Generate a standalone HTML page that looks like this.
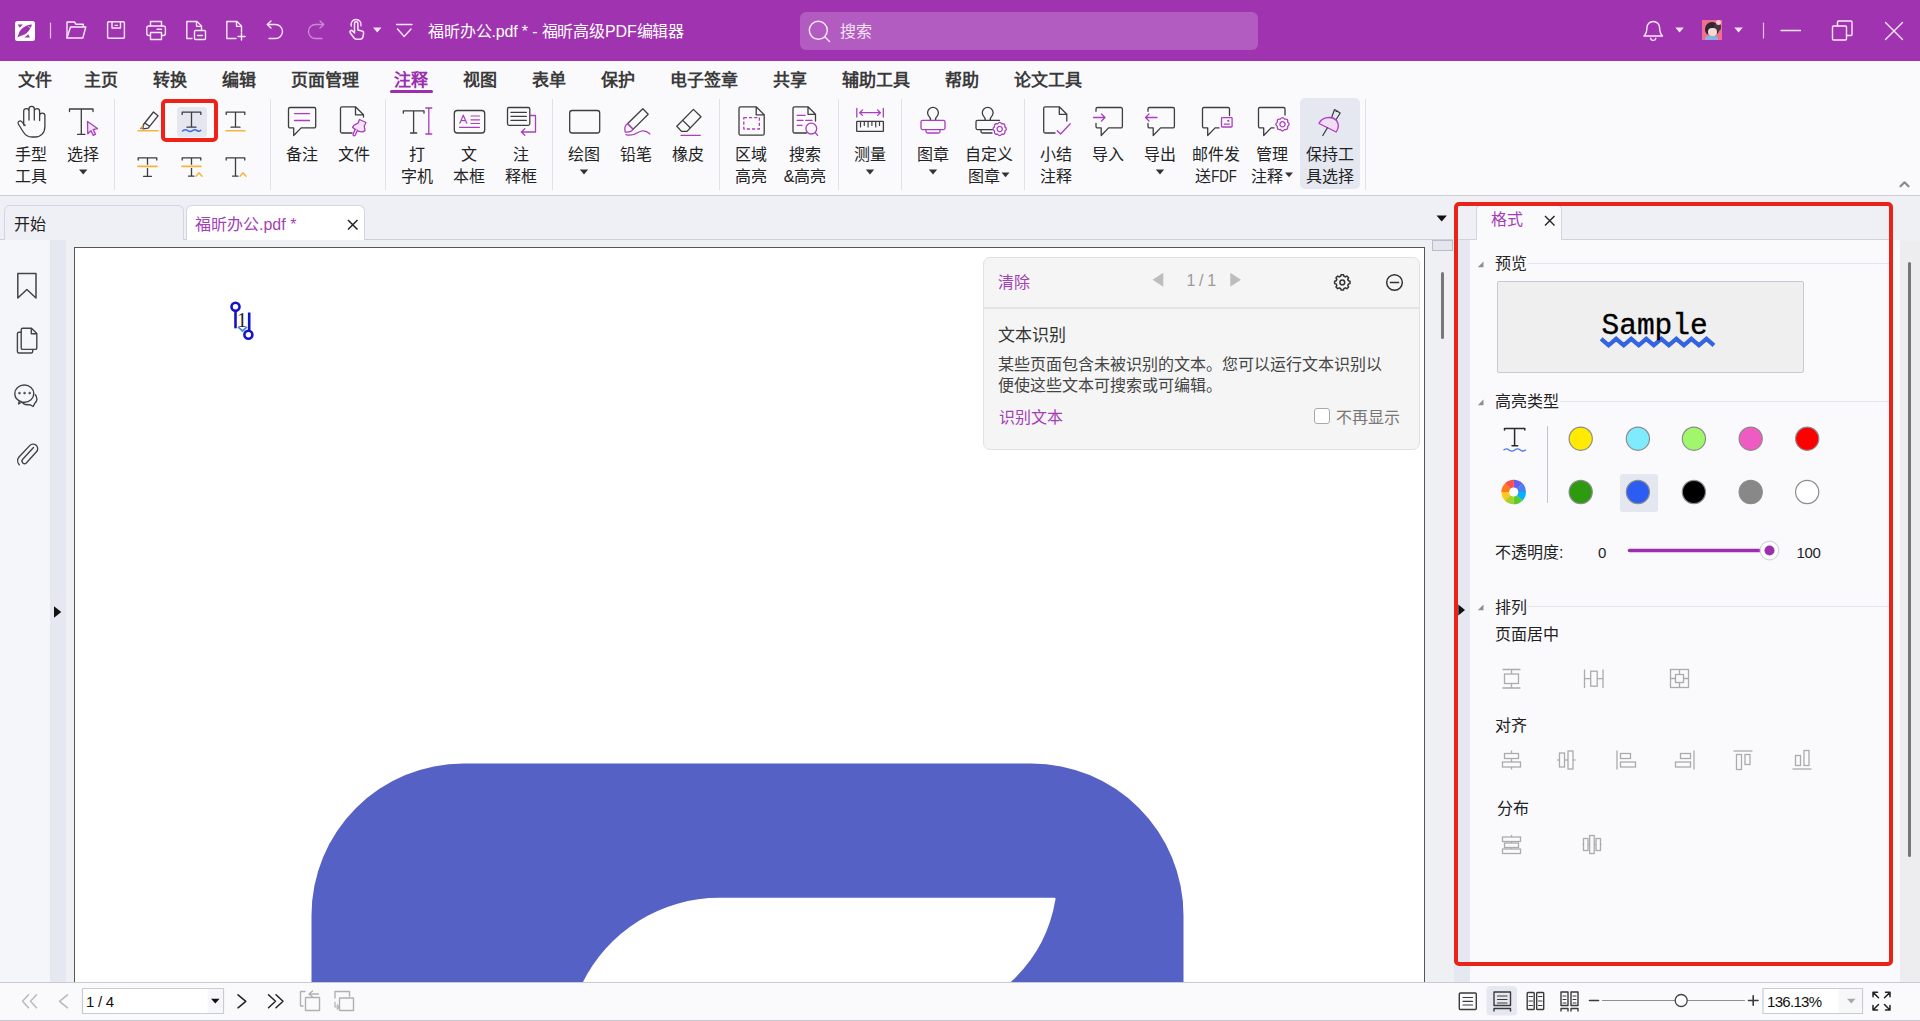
<!DOCTYPE html>
<html lang="zh-CN">
<head>
<meta charset="utf-8">
<title>PDF Editor</title>
<style>
*{box-sizing:border-box;margin:0;padding:0}
html,body{width:1920px;height:1021px;overflow:hidden;background:#EFF0F4;font-family:"Liberation Sans",sans-serif;color:#222;}
.abs{position:absolute}
svg{position:absolute;overflow:visible}
.t{position:absolute;white-space:nowrap;line-height:1}
/* title bar */
#titlebar{position:absolute;left:0;top:0;width:1920px;height:61px;background:#A033B0}
#search{position:absolute;left:800px;top:12px;width:458px;height:38px;border-radius:6px;background:#B25BC0}
/* ribbon */
#ribbon{position:absolute;left:0;top:61px;width:1920px;height:135px;background:#FAFAFD}
#ribbonline{position:absolute;left:0;top:195px;width:1920px;height:1px;background:#CBCDD5}
.mtab{position:absolute;top:71px;font-size:17px;font-weight:700;color:#3a3a3a;white-space:nowrap;line-height:20px}
.rl{position:absolute;font-size:16px;line-height:22px;text-align:center;color:#222;white-space:nowrap;transform:translateX(-50%)}
.vsep{position:absolute;top:99px;width:1px;height:91px;background:#E1E2E8}
/* doc tabs */
#doctabs{position:absolute;left:0;top:196px;width:1455px;height:45px;background:#EFF0F5}
/* sidebars */
#leftbar{position:absolute;left:0;top:240px;width:50px;height:742px;background:#F5F6FA}
#leftstrip{position:absolute;left:50px;top:240px;width:16px;height:742px;background:#E5E8F1}
#page{position:absolute;left:74px;top:247px;width:1351px;height:740px;background:#fff;border:1.5px solid #555;border-bottom:none}
/* status */
#status{position:absolute;left:0;top:982px;width:1920px;height:39px;background:#FAFAFD;border-top:1.5px solid #C9CBD3;border-bottom:1.5px solid #C4C6CC}
</style>
</head>
<body>
<div id="titlebar">
<div id="search"></div>
<svg width="1920" height="61" viewBox="0 0 1920 61" fill="none" stroke="#FCE9FF" stroke-width="1.4" stroke-linejoin="round" stroke-linecap="round">
<!-- app logo -->
<rect x="15" y="21" width="20" height="20" rx="2.5" fill="#fff" stroke="none"/>
<path d="M32,24.6 C26,25 20.5,28.5 18.8,33.5 L17.4,37.6 C21,35.5 24,35 26.5,33.2 C29.5,31 31,27.5 32,24.6 Z" fill="#A033B0" stroke="none"/>
<path d="M17.6,24.6 H23 C21.8,25.6 20.8,26.6 19.8,27.8 Z" fill="#A033B0" stroke="none"/>
<path d="M24.3,37.5 H30 L28.2,34.3 C27,35.6 25.8,36.6 24.3,37.5 Z" fill="#A033B0" stroke="none"/>
<path d="M28.6,26.6 L30.6,28.2" stroke="#fff" stroke-width="0.7"/>
<!-- sep -->
<path d="M50.5,23 V38" stroke="#E4C4EA" stroke-width="1.2"/>
<!-- folder -->
<path d="M67,38 V22 H74.5 L76,24.3 H83.3 V26.8"/>
<path d="M67,38 L70.5,27 H85.8 L82.8,38 Z"/>
<!-- save -->
<rect x="107.6" y="21.8" width="16.8" height="16.4" rx="1"/>
<path d="M112,21.8 V28 H120.5 V21.8"/>
<path d="M115,25.3 H117.5" stroke-width="1.2"/>
<!-- print -->
<path d="M150.5,26 V21.5 H161.5 V26"/>
<rect x="146.8" y="26" width="18.6" height="9.5" rx="2"/>
<rect x="150.5" y="32.5" width="11" height="7" fill="#A033B0"/>
<path d="M157,29.3 H161.5" stroke-width="1.4"/>
<!-- page with box -->
<path d="M192,38.5 H186.8 V21.5 H197 L201.5,26 V30"/>
<path d="M196.5,21.8 V26.3 H201.2" stroke-width="1.3"/>
<rect x="194.5" y="30.5" width="11" height="9" rx="1"/>
<path d="M197.5,35.5 H202.5" stroke-width="1.3"/>
<!-- new page plus -->
<path d="M236,38.5 H226.8 V21.5 H237 L241.5,26 V32"/>
<path d="M236.5,21.8 V26.3 H241.2" stroke-width="1.3"/>
<path d="M241.5,33 V40 M238,36.5 H245"/>
<!-- undo -->
<path d="M269,38.5 H275.5 A7,7 0 0 0 275.5,24.5 H267.5"/>
<path d="M271,21 L267.3,24.5 L271,28"/>
<!-- redo dim -->
<g stroke="#C88AD2">
<path d="M322,38.5 H315.5 A7,7 0 0 1 315.5,24.5 H323.5"/>
<path d="M320,21 L323.7,24.5 L320,28"/>
</g>
<!-- touch hand -->
<path d="M354.5,33 V23.5 a1.7,1.7 0 0 1 3.4,0 V30 l4.2,1 a2,2 0 0 1 1.5,2.2 l-0.6,3.5 a3.2,3.2 0 0 1 -3.2,2.6 h-3.2 a3.5,3.5 0 0 1 -2.8,-1.5 l-3.6,-5 a1.5,1.5 0 0 1 2.2,-2 z" stroke-width="1.5"/>
<path d="M351.3,26 a5,5 0 1 1 9.6,-0.2" stroke-width="1.4"/>
<path d="M373,27.500 h8.500 l-4.250,5 z" fill="#F8E3FB" stroke="none"/>
<!-- customize -->
<path d="M396.5,24.5 H412"/>
<path d="M397.5,29 L404.2,36.5 L411,29"/>
<!-- search icon -->
<circle cx="818.3" cy="30.3" r="9"/>
<path d="M825,37 L829.5,41.5"/>
<!-- bell -->
<path d="M1644,36 H1662.500 C1660,33.500 1659.600,31 1659.600,27.800 a6.350,6.350 0 0 0 -12.700,0 C1646.900,31 1646.500,33.500 1644,36 Z" stroke-width="1.400"/>
<path d="M1650.700,38.300 a2.600,2.600 0 0 0 5.100,0" stroke-width="1.400"/>
<path d="M1675.300,27.500 h8.500 l-4.250,5 z" fill="#F8E3FB" stroke="none"/>
<path d="M1734.300,27.500 h8.500 l-4.250,5 z" fill="#F8E3FB" stroke="none"/>
<path d="M1763.5,23 V38" stroke="#E4C4EA" stroke-width="1.2"/>
<!-- window btns -->
<path d="M1781,30.5 H1800.5" stroke-width="1.4"/>
<rect x="1832.5" y="26" width="14" height="14" rx="1" stroke-width="1.4"/>
<path d="M1837.5,26 V22 a1,1 0 0 1 1,-1 H1851 a1,1 0 0 1 1,1 V34.5 a1,1 0 0 1 -1,1 H1846.5" stroke-width="1.4"/>
<path d="M1885.5,22.5 L1902.5,39.5 M1902.5,22.5 L1885.5,39.5" stroke-width="1.4"/>
</svg>
<div class="t" id="apptitle" style="left:428px;top:24px;font-size:16px;color:#fff;letter-spacing:-0.15px">福昕办公.pdf * - 福昕高级PDF编辑器</div>
<div class="t" style="left:840px;top:24px;font-size:16px;color:#F3E3F6;">搜索</div>
<!-- avatar -->
<div class="abs" style="left:1702px;top:20px;width:20px;height:20px;background:#EE6F90;overflow:hidden">
 <div class="abs" style="left:3px;top:2px;width:14px;height:13px;background:#33262E;border-radius:7px 7px 5px 5px"></div>
 <div class="abs" style="left:12px;top:3px;width:7px;height:8px;background:#4A3440;border-radius:4px"></div>
 <div class="abs" style="left:6px;top:8px;width:9px;height:8px;background:#F4DAD4;border-radius:4px"></div>
 <div class="abs" style="left:3px;top:15.500px;width:13px;height:5px;background:#86B4DE;border-radius:3px 3px 0 0"></div>
 <div class="abs" style="left:14px;top:0px;width:5px;height:5px;background:#F7C9D6;border-radius:3px"></div>
</div>
</div>
</div>
<div id="ribbon"></div>
<div id="ribbonline"></div>
<div class="mtab" style="left:18px">文件</div>
<div class="mtab" style="left:84px">主页</div>
<div class="mtab" style="left:153px">转换</div>
<div class="mtab" style="left:222px">编辑</div>
<div class="mtab" style="left:291px">页面管理</div>
<div class="mtab" style="left:394px;color:#9B2FAE">注释</div>
<div class="mtab" style="left:463px">视图</div>
<div class="mtab" style="left:532px">表单</div>
<div class="mtab" style="left:601px">保护</div>
<div class="mtab" style="left:670px">电子签章</div>
<div class="mtab" style="left:773px">共享</div>
<div class="mtab" style="left:842px">辅助工具</div>
<div class="mtab" style="left:945px">帮助</div>
<div class="mtab" style="left:1014px">论文工具</div>
<div class="abs" style="left:389.500px;top:89.500px;width:43px;height:3.500px;border-radius:1.750px;background:#9B2FAE"></div>
<div class="abs" style="left:1300px;top:98px;width:60px;height:91px;border-radius:5px;background:#E5E8F1"></div>
<div class="abs" style="left:177px;top:107px;width:30px;height:30px;border-radius:4px;background:#E4E7F0"></div>
<div class="rl" style="left:31px;top:144px">手型</div>
<div class="rl" style="left:31px;top:166px">工具</div>
<div class="rl" style="left:83px;top:144px">选择</div>
<div class="rl" style="left:302px;top:144px">备注</div>
<div class="rl" style="left:354px;top:144px">文件</div>
<div class="rl" style="left:417px;top:144px">打</div>
<div class="rl" style="left:417px;top:166px">字机</div>
<div class="rl" style="left:469px;top:144px">文</div>
<div class="rl" style="left:469px;top:166px">本框</div>
<div class="rl" style="left:521px;top:144px">注</div>
<div class="rl" style="left:521px;top:166px">释框</div>
<div class="rl" style="left:584px;top:144px">绘图</div>
<div class="rl" style="left:636px;top:144px">铅笔</div>
<div class="rl" style="left:688px;top:144px">橡皮</div>
<div class="rl" style="left:751px;top:144px">区域</div>
<div class="rl" style="left:751px;top:166px">高亮</div>
<div class="rl" style="left:805px;top:144px">搜索</div>
<div class="rl" style="left:805px;top:166px">&amp;高亮</div>
<div class="rl" style="left:870px;top:144px">测量</div>
<div class="rl" style="left:933px;top:144px">图章</div>
<div class="rl" style="left:989px;top:144px">自定义</div>
<div class="rl" style="left:984px;top:166px">图章</div>
<div class="rl" style="left:1056px;top:144px">小结</div>
<div class="rl" style="left:1056px;top:166px">注释</div>
<div class="rl" style="left:1108px;top:144px">导入</div>
<div class="rl" style="left:1160px;top:144px">导出</div>
<div class="rl" style="left:1216px;top:144px">邮件发</div>
<div class="rl" style="left:1216px;top:166px">送<span style="display:inline-block;transform:scaleX(0.820);transform-origin:0 50%;margin-right:-5.600px">FDF</span></div>
<div class="rl" style="left:1272px;top:144px">管理</div>
<div class="rl" style="left:1267px;top:166px">注释</div>
<div class="rl" style="left:1330px;top:144px">保持工</div>
<div class="rl" style="left:1330px;top:166px">具选择</div>
<div class="vsep" style="left:114px"></div>
<div class="vsep" style="left:270px"></div>
<div class="vsep" style="left:385px"></div>
<div class="vsep" style="left:552px"></div>
<div class="vsep" style="left:719px"></div>
<div class="vsep" style="left:838px"></div>
<div class="vsep" style="left:901px"></div>
<div class="vsep" style="left:1024px"></div>
<div class="vsep" style="left:1365px"></div>
<div class="abs" style="left:161px;top:99px;width:57px;height:43px;border:4px solid #EF2119;border-radius:5px"></div>

<svg id="rib" width="1920" height="200" viewBox="0 0 1920 200" style="left:0;top:0" fill="none" stroke="#3d3d3d" stroke-width="1.300" stroke-linejoin="round" stroke-linecap="round">
<defs>
<g id="tsm"><path d="M-9.300,2.200 V0 H9.300 V2.200 M0,0 V15 M-4.500,15 H4.500"/></g>
<g id="gear"><circle r="2.600"/><path d="M-2.14,-5.17 Q0.00,-8.20 2.14,-5.17 Q5.80,-5.80 5.17,-2.14 Q8.20,0.00 5.17,2.14 Q5.80,5.80 2.14,5.17 Q0.00,8.20 -2.14,5.17 Q-5.80,5.80 -5.17,2.14 Q-8.20,0.00 -5.17,-2.14 Q-5.80,-5.80 -2.14,-5.17 Z"/></g>
<g id="bubble"><path d="M0,0 H27 V20.4 H12.8 L5.3,28 V20.4 H0 Z"/></g>
<g id="pagef"><path d="M15.5,0 H1.5 a1.5,1.5 0 0 0 -1.5,1.5 V24.7 a1.5,1.5 0 0 0 1.5,1.5 H21.5 a1.5,1.5 0 0 0 1.5,-1.5 V7.5 Z M15.5,0 V7.5 H23"/></g>
</defs>
<!-- hand tool -->
<path d="M23.700,125 V111.200 a2.650,2.650 0 0 1 5.300,0 V120 M29,111.200 V109 a2.650,2.650 0 0 1 5.300,0 V120 M34.300,111.200 a2.650,2.650 0 0 1 5.300,0 V120.500 M39.600,115.700 a2.650,2.650 0 0 1 5.300,0 V126.500 c0,6.300 -4,10.500 -9.800,10.500 h-3 c-4,0 -6.800,-1.800 -8.800,-5 l-5,-8 a2.100,2.100 0 0 1 3.400,-2.400 l3.400,3.900"/>
<!-- select -->
<path d="M69.5,111.5 V109 H93 V111.5 M81.3,109 V134.3 M77.5,134.3 H85"/>
<path d="M87.5,121.5 L97.5,128.5 L93.2,129.6 L95.6,134.2 L93.3,135.4 L91,130.8 L87.8,133.8 Z" stroke="#A93FBC" stroke-width="1.3" fill="#F6E4FA"/>
<path d="M79,169.5 h8.4 l-4.2,5 z" fill="#333" stroke="none"/>
<!-- highlighter -->
<path d="M143.5,124.5 L153.5,112 L158,115.8 L148.2,128.2 L143.3,128.8 Z M145,123 L149.6,126.6"/>
<path d="M140.5,128.6 L143.3,128.8 L143.6,125.5 Z" fill="#F3B63A" stroke="#8a6a20" stroke-width="0.8"/>
<path d="M138,130.8 H158" stroke="#F3B63A" stroke-width="1.6"/>
<!-- squiggly T (selected) -->
<use href="#tsm" x="191.5" y="112.2"/>
<path d="M182.5,131 c2,-1.6 3.6,-1.6 5.2,-0.4 c1.6,1.2 3.2,1.2 4.8,0 c1.6,-1.2 3.2,-1.2 4.6,0 c1.2,1 2.4,0.8 3.6,-0.2" stroke="#3C6BEA" stroke-width="1.5"/>
<!-- underline T -->
<use href="#tsm" x="235.5" y="112.2"/>
<path d="M226,130.8 H245" stroke="#F3B63A" stroke-width="1.6"/>
<!-- strikeout T -->
<g transform="translate(147.500,157.800)"><path d="M-9.300,2.200 V0 H9.300 V2.200 M0,0 V18.500 M-4,18.500 H4"/></g>
<rect x="137" y="164.8" width="21" height="3.2" fill="#FAFAFD" stroke="none"/>
<path d="M138,166.4 H157" stroke="#F3B63A" stroke-width="1.6"/>
<!-- replace T -->
<g transform="translate(191.5,157.8)"><path d="M-9.300,2.200 V0 H9.300 V2.200 M0,0 V18.300 M-3,18.300 H2.500"/></g>
<rect x="181" y="164.8" width="21" height="3.2" fill="#FAFAFD" stroke="none"/>
<path d="M182,166.4 H201" stroke="#F3B63A" stroke-width="1.6"/>
<path d="M196,176.3 L199,172.8 L202,176.3" stroke="#F3B63A" stroke-width="1.5"/>
<!-- insert T -->
<g transform="translate(235.5,157.8)"><path d="M-9.300,2.200 V0 H9.300 V2.200 M0,0 V18.300 M-3,18.300 H2.500"/></g>
<path d="M240,176.3 L243,172.8 L246,176.3" stroke="#F3B63A" stroke-width="1.5"/>
<!-- note -->
<path d="M290,107.5 H314.2 a1.5,1.5 0 0 1 1.5,1.5 V126.4 a1.5,1.5 0 0 1 -1.5,1.5 H301.2 L293.7,135.5 V127.9 H290 a1.5,1.5 0 0 1 -1.5,-1.5 V109 a1.5,1.5 0 0 1 1.5,-1.5 Z"/>
<path d="M294.5,113.6 H309.5 M294.5,120.5 H309.5" stroke="#A93FBC"/>
<!-- file attach -->
<path d="M352,133 H342 a1.5,1.5 0 0 1 -1.5,-1.5 V108.3 a1.5,1.5 0 0 1 1.5,-1.5 H355.5 L363.5,114.8 V117 M355.5,106.8 V114.8 H363.5"/>
<g stroke="#A93FBC" stroke-width="1.3" fill="#F6E4FA"><path d="M359.5,119.5 L366,122.5 L364.2,126 L365,130.5 C362,133.5 356,131 352.5,127.2 C353.5,124.5 356,124 358,123.2 Z"/><path d="M357.5,130.3 L355.3,135 a1.2,1.2 0 0 1 -2.2,-1 L355.3,129.3"/></g>
<!-- typewriter -->
<path d="M403.3,113.2 V110.8 H424 V113.2 M413.6,110.8 V133 M410.5,133 H416.7"/>
<path d="M428.8,108 V134 M425.8,108 H431.8 M425.8,134 H431.8" stroke="#A93FBC"/>
<!-- textbox -->
<rect x="454.3" y="110.5" width="30.4" height="22.5" rx="3"/>
<g stroke="#A93FBC" stroke-width="1.2"><path d="M459.8,123.2 L463.3,115.2 L466.8,123.2 M461,120.6 H465.6"/><path d="M471,116 H479.5 M471,119.8 H479.5 M471,123.5 H479.5 M459.5,127.3 H479.5"/></g>
<!-- callout -->
<rect x="507.5" y="107.5" width="22.3" height="17.8" rx="1.5"/>
<path d="M511,112.4 H526.3 M511,116.4 H526.3 M511,120.4 H526.3" stroke-width="1.3"/>
<path d="M530,115.5 H535.5 V132 H521.5 M524.8,128.8 L521.3,132 L524.8,135.2" stroke="#A93FBC" stroke-width="1.3"/>
<!-- draw rect -->
<rect x="569.7" y="110.5" width="30" height="22.5" rx="2.5"/>
<path d="M579.800,169.500 h8.400 l-4.200,5 z" fill="#333" stroke="none"/>
<!-- pencil -->
<path d="M627.5,123.7 L642.8,108.8 L648.2,114.3 L633,129.4"/>
<path d="M627.5,123.7 C624.5,125.5 624.5,129 625.2,132 C628.5,132.3 631.5,131.8 633,129.4 Z M628.2,124 L632.6,128.5" stroke="#A93FBC" stroke-width="1.3"/>
<path d="M626,134.6 C631,136.2 634.5,134.8 638.5,132.3 C642.5,129.8 646.5,130.8 649.8,133.8" stroke="#A93FBC" stroke-width="1.3"/>
<!-- eraser -->
<path d="M693.4,109.4 L701,116.8 L687,131.4 H681.5 L676.8,126.3 Z M682.8,120.4 L690.2,127.8"/>
<path d="M681,135.3 H700.3" stroke="#A93FBC"/>
<!-- area highlight -->
<path d="M756.2,106.8 H740.5 a1.5,1.5 0 0 0 -1.5,1.5 V133.7 a1.5,1.5 0 0 0 1.5,1.5 H762.7 a1.5,1.5 0 0 0 1.5,-1.5 V114.8 Z M756.2,106.8 V114.8 H764.2"/>
<rect x="743.8" y="117.6" width="15.6" height="11.4" stroke="#A93FBC" stroke-dasharray="3.2 2" stroke-linecap="butt"/>
<!-- search&highlight -->
<path d="M806.5,133 H794.5 a1.5,1.5 0 0 1 -1.5,-1.5 V108.3 a1.5,1.5 0 0 1 1.5,-1.5 H808 L815.5,114.3 V121 M808,106.8 V114.3 H815.5"/>
<g stroke="#A93FBC" stroke-width="1.3"><path d="M797.2,115.4 H805 M797.2,120.4 H803 M805.8,120.4 H812 M797.2,125.4 H802"/><circle cx="811.3" cy="128.6" r="5.4"/><path d="M815.2,132.5 L817.6,135.3"/></g>
<!-- measure -->
<g stroke="#A93FBC" stroke-width="1.3"><path d="M856.8,108.5 V117 M883.3,108.5 V117 M859.7,112.7 H880.4 M862.5,110 L859.7,112.7 L862.5,115.4 M877.6,110 L880.4,112.7 L877.6,115.4"/></g>
<rect x="856.7" y="121.4" width="26.7" height="10" rx="0.5"/>
<path d="M860.5,121.6 V127 M864.3,121.6 V125.5 M868.1,121.6 V127 M871.9,121.6 V125.5 M875.7,121.6 V127 M879.5,121.6 V125.5" stroke-width="1.2"/>
<path d="M865.800,169.500 h8.400 l-4.200,5 z" fill="#333" stroke="none"/>
<!-- stamp -->
<path d="M930.2,120.2 C931,119 930.3,117.8 929.2,116.6 a5.4,5.4 0 1 1 7.6,0 C935.7,117.800 935,119 935.8,120.200"/>
<g stroke="#A93FBC"><rect x="921" y="120.3" width="24" height="9.3" rx="1.5"/><path d="M926,129.6 V131.5 a1.5,1.5 0 0 0 1.5,1.5 H938.500 a1.500,1.500 0 0 0 1.500,-1.500 V129.600"/></g>
<path d="M928.800,169.500 h8.400 l-4.200,5 z" fill="#333" stroke="none"/>
<!-- custom stamp -->
<path d="M984.9,120.2 C985.7,119 985,117.8 983.9,116.6 a5.4,5.4 0 1 1 7.6,0 C990.4,117.8 989.7,119 990.5,120.2"/>
<path d="M992.5,129.6 H977.5 a1.5,1.5 0 0 1 -1.5,-1.500 V121.800 a1.500,1.500 0 0 1 1.500,-1.500 H999.500 M981,129.600 V131.500 a1.500,1.500 0 0 0 1.500,1.500 H992"/>
<use href="#gear" x="999.7" y="129" stroke="#A93FBC" stroke-width="1.3"/>
<path d="M1001.5,172.5 h8 l-4,4.8 z" fill="#333" stroke="none"/>
<!-- summarize -->
<path d="M1055,133 H1045.200 a1.500,1.500 0 0 1 -1.500,-1.500 V108.300 a1.500,1.500 0 0 1 1.500,-1.500 H1059.300 L1066.800,114.300 V121 M1059.300,106.800 V114.300 H1066.800"/>
<path d="M1057.200,130.800 L1060.600,134 L1070.200,123.800" stroke="#A93FBC"/>
<!-- import -->
<path d="M1096,111.300 V109 a1.500,1.500 0 0 1 1.500,-1.500 H1120.900 a1.500,1.500 0 0 1 1.500,1.500 V126.400 a1.500,1.500 0 0 1 -1.500,1.500 H1108.600 L1101.200,135.500 V127.900 H1097.500 a1.500,1.500 0 0 1 -1.500,-1.500 V123.500"/>
<path d="M1093.500,117.500 H1105 M1101.500,114 L1105,117.500 L1101.500,121" stroke="#A93FBC" stroke-width="1.300"/>
<!-- export -->
<path d="M1148,111.300 V109 a1.500,1.500 0 0 1 1.500,-1.500 H1172.900 a1.500,1.500 0 0 1 1.500,1.500 V126.400 a1.500,1.500 0 0 1 -1.500,1.500 H1160.600 L1153.200,135.500 V127.900 H1149.500 a1.500,1.500 0 0 1 -1.500,-1.500 V123.500"/>
<path d="M1157,117.500 H1145.500 M1149,114 L1145.500,117.500 L1149,121" stroke="#A93FBC" stroke-width="1.300"/>
<path d="M1155.800,169.500 h8.400 l-4.200,5 z" fill="#333" stroke="none"/>
<!-- email fdf -->
<path d="M1229.500,115.500 V109 a1.500,1.500 0 0 0 -1.500,-1.500 H1204 a1.500,1.500 0 0 0 -1.500,1.500 V126.400 a1.500,1.500 0 0 0 1.500,1.500 H1207.700 V135.500 L1215.100,127.900 H1219"/>
<g stroke="#A93FBC" stroke-width="1.300"><rect x="1221.500" y="117.600" width="10.600" height="9.400" rx="0.800"/><path d="M1224.300,124.200 H1229.300" /><circle cx="1228.300" cy="120.800" r="0.500"/></g>
<!-- manage comments -->
<path d="M1285,115 V109 a1.500,1.500 0 0 0 -1.500,-1.500 H1260 a1.500,1.500 0 0 0 -1.500,1.500 V126.400 a1.500,1.500 0 0 0 1.500,1.500 H1263.700 V135.500 L1271.100,127.900 H1274"/>
<use href="#gear" x="1282.500" y="124.300" stroke="#A93FBC" stroke-width="1.300"/>
<path d="M1285,172.500 h8 l-4,4.800 z" fill="#333" stroke="none"/>
<!-- keep tool selected: pushpin -->
<path d="M1331.500,118 L1334.500,109.500 L1340.200,113 L1335.500,120.500 M1336,111.500 C1337,110.800 1338,111 1338.500,112" stroke-width="1.200"/>
<path d="M1319,123.500 C1322,117 1332,115.500 1336.500,120.500 C1339,124 1338.500,128.500 1336.200,132 Z" stroke="#A93FBC" stroke-width="1.300" fill="#F1DDF6"/>
<path d="M1327.300,128 L1322.800,135.500"/>
<!-- collapse caret -->
<path d="M1900.500,186.300 L1904.500,182.300 L1908.500,186.300" stroke="#8A8A8A" stroke-width="2.200"/>
</svg>
<div id="doctabs">
 <div class="abs" style="left:0;top:42.500px;width:1455px;height:1.500px;background:#CDD0D9"></div>
 <div class="abs" style="left:4px;top:9px;width:180px;height:35px;border:1.5px solid #D3D6DF;border-bottom:none;border-radius:6px 6px 0 0;background:#EFF0F5"></div>
 <div class="abs" style="left:186px;top:9px;width:179px;height:35px;border:1.5px solid #D3D6DF;border-bottom:none;border-radius:6px 6px 0 0;background:#fff"></div>
 <div class="t" style="left:14px;top:21px;font-size:16px;color:#222">开始</div>
 <div class="t" style="left:195px;top:21px;font-size:16px;color:#A440B6">福昕办公.pdf *</div>
 <svg width="12" height="12" style="left:346.500px;top:22.500px" stroke="#222" stroke-width="1.500"><path d="M1,1 L10.500,10.500 M10.500,1 L1,10.500"/></svg>
 <svg width="12" height="8" style="left:1436px;top:19px"><path d="M0.500,0.500 h10.400 l-5.200,6 z" fill="#111"/></svg>
</div>
<div id="leftbar"></div>
<div id="leftstrip"></div>
<svg width="70" height="760" viewBox="0 241 70 760" style="left:0;top:241px" fill="none" stroke="#444" stroke-width="1.500" stroke-linejoin="round" stroke-linecap="round">
 <path d="M17.800,273.500 H36 V298 L26.900,289.500 L17.800,298 Z"/>
 <path d="M21.200,346 V329.800 a1.500,1.500 0 0 1 1.500,-1.500 H31.500 L36.800,333.600 V347.900 a1.500,1.500 0 0 1 -1.500,1.500 H22.700 a1.500,1.500 0 0 1 -1.500,-1.500 Z M31.300,328.600 V333.800 H36.600" stroke-width="1.400"/>
 <path d="M21.200,332.200 H18.900 a1.500,1.500 0 0 0 -1.500,1.500 V351.500 a1.500,1.500 0 0 0 1.500,1.500 H31.200 a1.500,1.500 0 0 0 1.500,-1.500 V349.500" stroke-width="1.400"/>
 <path d="M21.300,401.700 C17.300,400.500 14.800,397.300 14.800,393.600 C14.800,388.700 19,385 24.300,385 C29.600,385 33.800,388.700 33.800,393.600 C33.800,398.500 29.600,402.200 24.300,402.200 L21.800,402 L18.600,404 L19.300,401 " stroke-width="1.400"/>
 <path d="M35.300,394.800 C36.300,396 36.900,397.400 36.900,399 C36.900,400.700 36.100,402.200 34.800,403.300 L33.200,406.500 L29.800,404.600 C27,404.900 24.500,404.300 23,403.300" stroke-width="1.400"/>
 <circle cx="19.400" cy="393.100" r="0.900" fill="#444" stroke-width="0.600"/><circle cx="24.500" cy="393.100" r="0.900" fill="#444" stroke-width="0.600"/><circle cx="29.600" cy="393.100" r="0.900" fill="#444" stroke-width="0.600"/>
 <path d="M33.500,447.500 L22.500,459.500 a2.600,2.600 0 0 0 3.800,3.500 L36.500,451.800 a4.600,4.600 0 0 0 -6.800,-6.200 L19,457 a6,6 0 0 0 0.300,7.800 " stroke-width="1.400"/>
 <path d="M54,606.300 L61.300,612 L54,617.700 Z" fill="#111" stroke="none"/>
</svg>
<div id="page">
 <svg width="1349" height="735" viewBox="75.500 248.500 1349 735" style="left:0;top:0">
  <path d="M312,984 V916 a152,152 0 0 1 152,-152 H1032 a152,152 0 0 1 152,152 V984 H1009.600 A144.400,144.400 0 0 0 1055.900,900.300 C1056.400,898.900 1055.800,898.300 1054.300,898.300 H720 A152.800,152.800 0 0 0 582.700,984 Z" fill="#5661C6"/>
  <!-- annotation markers -->
  <g fill="none" stroke="#1313C8" stroke-width="2.600">
   <circle cx="236" cy="307.300" r="4" fill="#fff"/>
   <path d="M236,311.500 V328.800"/>
   <path d="M249.700,313 V331"/>
   <circle cx="248.900" cy="335.200" r="4" fill="#fff"/>
  </g>
  <path d="M238.500,327.300 L243,331.500 L247.500,327.300" fill="none" stroke="#4B86E8" stroke-width="1.800"/>
  <text x="237.600" y="327.200" font-family="Liberation Serif, serif" font-size="20" fill="#222">1</text>
 </svg>
</div>
<!-- notification -->
<div class="abs" style="left:983px;top:257px;width:437px;height:193px;background:#F5F5F5;border:1.500px solid #E1E1E4;border-radius:7px"></div>
<div class="abs" style="left:984px;top:306.500px;width:435px;height:2px;background:#E4E4E6"></div>
<div class="t" style="left:998px;top:275px;font-size:16px;color:#A440B6">清除</div>
<div class="t" style="left:1186.500px;top:272.500px;font-size:16px;color:#9A9A9A;letter-spacing:-0.400px">1 / 1</div>
<svg width="100" height="20" viewBox="1150 270 100 20" style="left:1150px;top:270px"><path d="M1163.300,272.800 V286.800 L1152.500,279.800 Z M1230.300,272.800 V286.800 L1241,279.800 Z" fill="#BDBDBD"/></svg>
<svg width="80" height="24" viewBox="1330 270 80 24" style="left:1330px;top:270px" fill="none" stroke="#333" stroke-width="1.500">
 <circle cx="1342.3" cy="282.4" r="2.400"/>
 <path d="M1340.67,276.31 L1341.08,274.70 L1343.52,274.70 L1343.93,276.31 A6.3,6.3 0 0 1 1345.45,276.94 L1345.45,276.94 L1346.88,276.09 L1348.61,277.82 L1347.76,279.25 A6.3,6.3 0 0 1 1348.39,280.77 L1348.39,280.77 L1350.00,281.18 L1350.00,283.62 L1348.39,284.03 A6.3,6.3 0 0 1 1347.76,285.55 L1347.76,285.55 L1348.61,286.98 L1346.88,288.71 L1345.45,287.86 A6.3,6.3 0 0 1 1343.93,288.49 L1343.93,288.49 L1343.52,290.10 L1341.08,290.10 L1340.67,288.49 A6.3,6.3 0 0 1 1339.15,287.86 L1339.15,287.86 L1337.72,288.71 L1335.99,286.98 L1336.84,285.55 A6.3,6.3 0 0 1 1336.21,284.03 L1336.21,284.03 L1334.60,283.62 L1334.60,281.18 L1336.21,280.77 A6.3,6.3 0 0 1 1336.84,279.25 L1336.84,279.25 L1335.99,277.82 L1337.72,276.09 L1339.15,276.94 A6.3,6.3 0 0 1 1340.67,276.31 Z" stroke-linejoin="round"/>
 <circle cx="1394.500" cy="282.500" r="7.800"/><path d="M1389.800,282.500 H1399.200"/>
</svg>
<div class="t" style="left:998px;top:327px;font-size:17px;color:#333">文本识别</div>
<div class="t" style="left:998px;top:357px;font-size:16px;color:#444">某些页面包含未被识别的文本。您可以运行文本识别以</div>
<div class="t" style="left:998px;top:377.500px;font-size:16px;color:#444">便使这些文本可搜索或可编辑。</div>
<div class="t" style="left:999px;top:409.500px;font-size:16px;color:#A440B6">识别文本</div>
<div class="abs" style="left:1314px;top:408px;width:16px;height:16px;background:#fff;border:1.500px solid #A9A9A9;border-radius:3px"></div>
<div class="t" style="left:1336px;top:409.500px;font-size:16px;color:#777">不再显示</div>
<!-- doc scrollbar -->
<div class="abs" style="left:1432px;top:240px;width:21px;height:11px;background:#E4E7F0;border:1px solid #B9BDCA"></div>
<div class="abs" style="left:1440.500px;top:272px;width:3px;height:67px;background:#777;border-radius:1.500px"></div>
<!-- right panel -->
<div class="abs" style="left:1453px;top:196px;width:467px;height:786px;background:#EFF0F4"></div>
<div class="abs" style="left:1899.500px;top:241px;width:20.500px;height:741px;background:#EDEDF0"></div>
<div class="abs" style="left:1908px;top:262px;width:3px;height:595px;background:#777;border-radius:1.500px"></div>
<div class="abs" style="left:1456px;top:204px;width:436px;height:36px;background:#EFF0F5"></div>
<div class="abs" style="left:1453.500px;top:240px;width:16.500px;height:742px;background:#E5E8F1"></div>
<div class="abs" style="left:1470px;top:240px;width:430px;height:742px;background:#FAFAFD"></div>
<div class="abs" style="left:1456px;top:239px;width:436px;height:1px;background:#D0D3DC"></div>
<div class="abs" style="left:1475.500px;top:205px;width:86.500px;height:35px;background:#FAFAFD;border:1.500px solid #D3D6DF;border-bottom:none;border-radius:4px 4px 0 0"></div>
<div class="t" style="left:1491px;top:212px;font-size:16px;color:#A440B6">格式</div>
<svg width="12" height="12" style="left:1544px;top:214.500px" stroke="#222" stroke-width="1.400"><path d="M1,1 L10.500,10.500 M10.500,1 L1,10.500"/></svg>

<div class="abs" style="left:1528px;top:263px;width:361px;height:1px;background:#E3E5EB"></div>
<div class="abs" style="left:1560px;top:401px;width:329px;height:1px;background:#E3E5EB"></div>
<div class="abs" style="left:1528px;top:606px;width:361px;height:1px;background:#E3E5EB"></div>
<div class="t" style="left:1495px;top:256px;font-size:16px;color:#222">预览</div>
<div class="t" style="left:1495px;top:394px;font-size:16px;color:#222">高亮类型</div>
<div class="t" style="left:1495px;top:545px;font-size:16px;color:#222">不透明度:</div>
<div class="t" style="left:1598px;top:545px;font-size:15px;color:#222">0</div>
<div class="t" style="left:1796.500px;top:545px;font-size:15px;color:#222;letter-spacing:-0.400px">100</div>
<div class="t" style="left:1495px;top:599.500px;font-size:16px;color:#222">排列</div>
<div class="t" style="left:1495px;top:626.500px;font-size:16px;color:#222">页面居中</div>
<div class="t" style="left:1495px;top:718px;font-size:16px;color:#222">对齐</div>
<div class="t" style="left:1497px;top:801px;font-size:16px;color:#222">分布</div>
<div class="abs" style="left:1497px;top:281px;width:307px;height:92px;background:#EFEFEF;border:1.500px solid #C6CAD4;border-radius:2px"></div>
<div class="t" id="sample" style="z-index:3;left:1601.500px;top:309px;font-family:'Liberation Mono',monospace;font-size:29.500px;color:#000;line-height:34px;-webkit-text-stroke:0.350px #000">Sample</div>
<div class="abs" style="left:1619.500px;top:473.500px;width:38px;height:38px;background:#E4E7F0;border-radius:3px"></div>
<div class="abs" style="left:1547px;top:426px;width:1px;height:77px;background:#C2C3C9"></div>
<svg width="467" height="786" viewBox="1453 196 467 786" style="left:1453px;top:196px" fill="none">
 <path d="M1601.10,338.80 L1608.62,345.30 L1616.15,338.80 L1623.67,345.30 L1631.20,338.80 L1638.72,345.30 L1646.25,338.80 L1653.77,345.30 L1661.30,338.80 L1668.82,345.30 L1676.35,338.80 L1683.88,345.30 L1691.40,338.80 L1698.92,345.30 L1706.45,338.80 L1713.97,345.30" stroke="#3564E3" stroke-width="4.200" stroke-linejoin="miter" stroke-miterlimit="10"/>
 <!-- section triangles -->
 <g fill="#8E8E8E"><path d="M1483.500,261.500 V267.200 H1477.800 Z"/><path d="M1483.500,399.500 V405.200 H1477.800 Z"/><path d="M1483.500,604.500 V610.200 H1477.800 Z"/></g>
 <path d="M1458.300,604.500 L1465,610 L1458.300,615.500 Z" fill="#111"/>
 <!-- squiggly type icon -->
 <g stroke="#2a2a2a" stroke-width="1.500" stroke-linecap="round" stroke-linejoin="round"><path d="M1504.500,430 V428.400 H1524.800 V430 M1514.600,428.400 V445.800 M1512,445.800 H1517.700"/></g>
 <path d="M1503.500,450.300 c1.900,-1.900 3.700,-1.900 5.600,-0.300 c1.900,1.500 3.700,1.500 5.600,0 c1.900,-1.500 3.700,-1.500 5.600,0 c1.900,1.500 3.700,1.400 5.600,-0.200" stroke="#4A76E2" stroke-width="1.300"/>
 <!-- colours -->
 <circle cx="1580.7" cy="438.7" r="11.600" fill="#FFEB00" stroke="#8C8C8C" stroke-width="1.200"/>
 <circle cx="1637.9" cy="438.7" r="11.600" fill="#7EEBFF" stroke="#8C8C8C" stroke-width="1.200"/>
 <circle cx="1693.9" cy="438.7" r="11.600" fill="#A0F76C" stroke="#8C8C8C" stroke-width="1.200"/>
 <circle cx="1750.7" cy="438.7" r="11.600" fill="#EE5BC2" stroke="#8C8C8C" stroke-width="1.200"/>
 <circle cx="1807.2" cy="438.7" r="11.600" fill="#FF0000" stroke="#8C8C8C" stroke-width="1.200"/>
 <circle cx="1580.7" cy="492" r="11.600" fill="#2E9A0E" stroke="#8C8C8C" stroke-width="1.200"/>
 <circle cx="1637.9" cy="492" r="11.600" fill="#2B5DF2" stroke="#8C8C8C" stroke-width="1.200"/>
 <circle cx="1693.9" cy="492" r="11.600" fill="#000000" stroke="#8C8C8C" stroke-width="1.200"/>
 <circle cx="1750.7" cy="492" r="11.600" fill="#888888" stroke="#8C8C8C" stroke-width="1.200"/>
 <circle cx="1807.2" cy="492" r="11.600" fill="#FFFFFF" stroke="#8C8C8C" stroke-width="1.200"/>
 <path d="M1513.7,492 L1513.70,479.70 A12.3,12.3 0 0 1 1522.57,483.48 Z" fill="#6A5CF0"/>
 <path d="M1513.7,492 L1522.40,483.30 A12.3,12.3 0 0 1 1526.00,492.25 Z" fill="#4A80F0"/>
 <path d="M1513.7,492 L1526.00,492.00 A12.3,12.3 0 0 1 1522.22,500.87 Z" fill="#00B2FF"/>
 <path d="M1513.7,492 L1522.40,500.70 A12.3,12.3 0 0 1 1513.45,504.30 Z" fill="#5CCB2C"/>
 <path d="M1513.7,492 L1513.70,504.30 A12.3,12.3 0 0 1 1504.83,500.52 Z" fill="#A4D42C"/>
 <path d="M1513.7,492 L1505.00,500.70 A12.3,12.3 0 0 1 1501.40,491.75 Z" fill="#FFC81E"/>
 <path d="M1513.7,492 L1501.40,492.00 A12.3,12.3 0 0 1 1505.18,483.13 Z" fill="#FF7A1A"/>
 <path d="M1513.7,492 L1505.00,483.30 A12.3,12.3 0 0 1 1513.95,479.70 Z" fill="#F5524A"/>
 <circle cx="1513.7" cy="492" r="4.600" fill="#fff"/>
 <!-- opacity slider -->
 <path d="M1629.500,550.500 H1762" stroke="#9B2FAE" stroke-width="3.600" stroke-linecap="round"/>
 <circle cx="1769.500" cy="550.500" r="9.300" fill="#fff" stroke="#D9D3DE" stroke-width="1.200"/>
 <circle cx="1769.500" cy="550.500" r="5" fill="#9B2FAE"/>
 <!-- arrange icons -->
 <g stroke="#ABABAB" stroke-width="1.300">
  <!-- page center row -->
  <path d="M1502.500,669.500 H1520.500 M1502.500,688 H1520.500 M1511.500,669.500 V674 M1511.500,683.500 V688"/><rect x="1504.500" y="674" width="14" height="9.500"/>
  <path d="M1584.500,669.500 V688 M1603,669.500 V688 M1584.500,678.700 H1590.700 M1597.200,678.700 H1603"/><rect x="1590.700" y="671.200" width="6.500" height="15"/>
  <rect x="1670.500" y="669.500" width="18" height="18"/><rect x="1675.500" y="674.500" width="8" height="8"/><path d="M1679.500,669.500 V674.500 M1679.500,682.500 V687.500 M1670.500,678.500 H1675.500 M1683.500,678.500 H1688.500"/>
  <!-- align row -->
  <path d="M1511.500,750.500 V769.500"/><rect x="1504.500" y="753.500" width="14" height="5" fill="#FAFAFD"/><rect x="1502.500" y="762" width="18" height="5" fill="#FAFAFD"/>
  <path d="M1557,760 H1575.500"/><rect x="1559.500" y="753" width="5" height="14" fill="#FAFAFD"/><rect x="1568" y="751" width="5" height="18" fill="#FAFAFD"/>
  <path d="M1617,750.500 V769.500"/><rect x="1620.500" y="753.500" width="10" height="5"/><rect x="1620.500" y="762" width="15" height="5"/>
  <path d="M1694,750.500 V769.500"/><rect x="1680.500" y="753.500" width="10" height="5"/><rect x="1675.500" y="762" width="15" height="5"/>
  <path d="M1733.500,751 H1752.500"/><rect x="1736.500" y="754.500" width="5" height="15"/><rect x="1745" y="754.500" width="5" height="10"/>
  <path d="M1792.500,769 H1811.500"/><rect x="1795.500" y="755.500" width="5" height="10"/><rect x="1804" y="750.500" width="5" height="15"/>
  <!-- distribute row -->
  <path d="M1511.500,835 V854"/><rect x="1502.500" y="837" width="18" height="4.500" fill="#FAFAFD"/><rect x="1504.500" y="843" width="14" height="4.500" fill="#FAFAFD"/><rect x="1502.500" y="849" width="18" height="4.500" fill="#FAFAFD"/>
  <path d="M1582.500,844.500 H1601.500"/><rect x="1583.500" y="838.500" width="4.500" height="12" fill="#FAFAFD"/><rect x="1589.700" y="835.500" width="4.500" height="18" fill="#FAFAFD"/><rect x="1596" y="838.500" width="4.500" height="12" fill="#FAFAFD"/>
 </g>
</svg>
<div class="abs" style="left:1454px;top:202px;width:438.500px;height:763.500px;border:4px solid #EA2319;border-radius:5px"></div>
<div id="status">
<svg width="1920" height="39" viewBox="0 982 1920 39" style="left:0;top:-1.500px" fill="none" stroke="#B9B9BC" stroke-width="1.500" stroke-linecap="round" stroke-linejoin="round">
 <path d="M28.500,994.800 L22.500,1001.300 L28.500,1007.800 M36.500,994.800 L30.500,1001.300 L36.500,1007.800"/>
 <path d="M67.500,994.800 L59.500,1001.300 L67.500,1007.800"/>
 <g stroke="#222"><path d="M238,994.800 L245.800,1001.300 L238,1007.800"/><path d="M268.500,994.800 L275.500,1001.300 L268.500,1007.800 M276,994.800 L283,1001.300 L276,1007.800"/></g>
 <rect x="82.500" y="988.500" width="141" height="25" fill="#fff" stroke="#C9CBD3" stroke-width="1.200"/>
 <rect x="207.500" y="989.200" width="15.400" height="23.600" fill="#F7F7FA" stroke="none"/>
 <path d="M211,998.800 h8.600 l-4.300,4.800 z" fill="#111" stroke="none"/>
 <!-- rotate/split icons -->
 <g stroke="#B0B0B3" stroke-width="1.400"><path d="M305,991.500 H300.500 V1006 H303"/><rect x="305.500" y="997.500" width="14" height="13"/><path d="M309,994 H318.500 M312.500,991 L309,994 L312.500,997"/>
 <path d="M335,998 V991.500 H349.500 V996"/><rect x="339.500" y="998" width="14" height="12.500"/><path d="M335,1002 V1007 H339 M337,1004.800 L339.300,1007 L337,1009.200" stroke-width="1.200"/></g>
 <!-- right icons -->
 <rect x="1486.500" y="986" width="30.500" height="29.500" rx="4" fill="#E5E8F1" stroke="none"/>
 <g stroke="#3a3a3a" stroke-width="1.400">
  <rect x="1459.300" y="993" width="17" height="16.500" rx="1"/><path d="M1463,997.500 H1472.500 M1463,1001.300 H1472.500 M1463,1005 H1472.500" stroke-width="1.200"/>
  <path d="M1494,1011 V1008.500 H1510.500 V1011 M1494,1005.500 V992 H1510.500 V1005.500 Z" /><path d="M1497.500,996 H1507 M1497.500,999.500 H1507 M1497.500,1003 H1507" stroke-width="1.200"/>
  <rect x="1527.200" y="992.500" width="7" height="17" rx="0.800"/><rect x="1536.700" y="992.500" width="7" height="17" rx="0.800"/><path d="M1529,996.500 H1532.500 M1529,1001 H1532.500 M1529,1005.500 H1532.500 M1538.500,996.500 H1542 M1538.500,1001 H1542 M1538.500,1005.500 H1542" stroke-width="1.100"/>
  <path d="M1561,1011 V1008.500 H1568 V1011 M1571,1011 V1008.500 H1578 V1011"/><rect x="1561" y="992" width="7" height="13.500"/><rect x="1571" y="992" width="7" height="13.500"/><path d="M1563,996 H1566 M1563,999.500 H1566 M1563,1003 H1566 M1573,996 H1576 M1573,999.500 H1576 M1573,1003 H1576" stroke-width="1.100"/>
  <path d="M1589.500,1000.500 H1598.500" stroke-width="1.600"/>
  <path d="M1748.500,1000.500 H1758 M1753.200,995.800 V1005.200" stroke-width="1.600"/>
 </g>
 <path d="M1602.500,1000.500 H1744.500" stroke="#8E8E92" stroke-width="1.200"/>
 <circle cx="1681.200" cy="1000.500" r="6" fill="#fff" stroke="#444" stroke-width="1.300"/>
 <rect x="1763" y="988.500" width="99.500" height="25" fill="#fff" stroke="#C9CBD3" stroke-width="1.200"/>
 <rect x="1838.500" y="989.200" width="23.400" height="23.600" fill="#F7F7FA" stroke="none"/>
 <path d="M1847,998.800 h8.600 l-4.300,4.800 z" fill="#A8A8AB" stroke="none"/>
 <g stroke="#222" stroke-width="1.500"><path d="M1873,996.800 V992.300 H1877.500 M1873.300,992.600 L1878.500,997.800 M1885.500,992.300 H1890 V996.800 M1889.700,992.600 L1884.500,997.800 M1873,1005.500 V1010 H1877.500 M1873.300,1009.700 L1878.500,1004.500 M1885.500,1010 H1890 V1005.500 M1889.700,1009.700 L1884.500,1004.500"/></g>
</svg>
<div class="t" style="left:86px;top:11px;font-size:15px;color:#111;word-spacing:-0.500px">1 / 4</div>
<div class="t" style="left:1767px;top:11px;font-size:15px;color:#111;letter-spacing:-0.700px">136.13%</div>
</div>
</body>
</html>
